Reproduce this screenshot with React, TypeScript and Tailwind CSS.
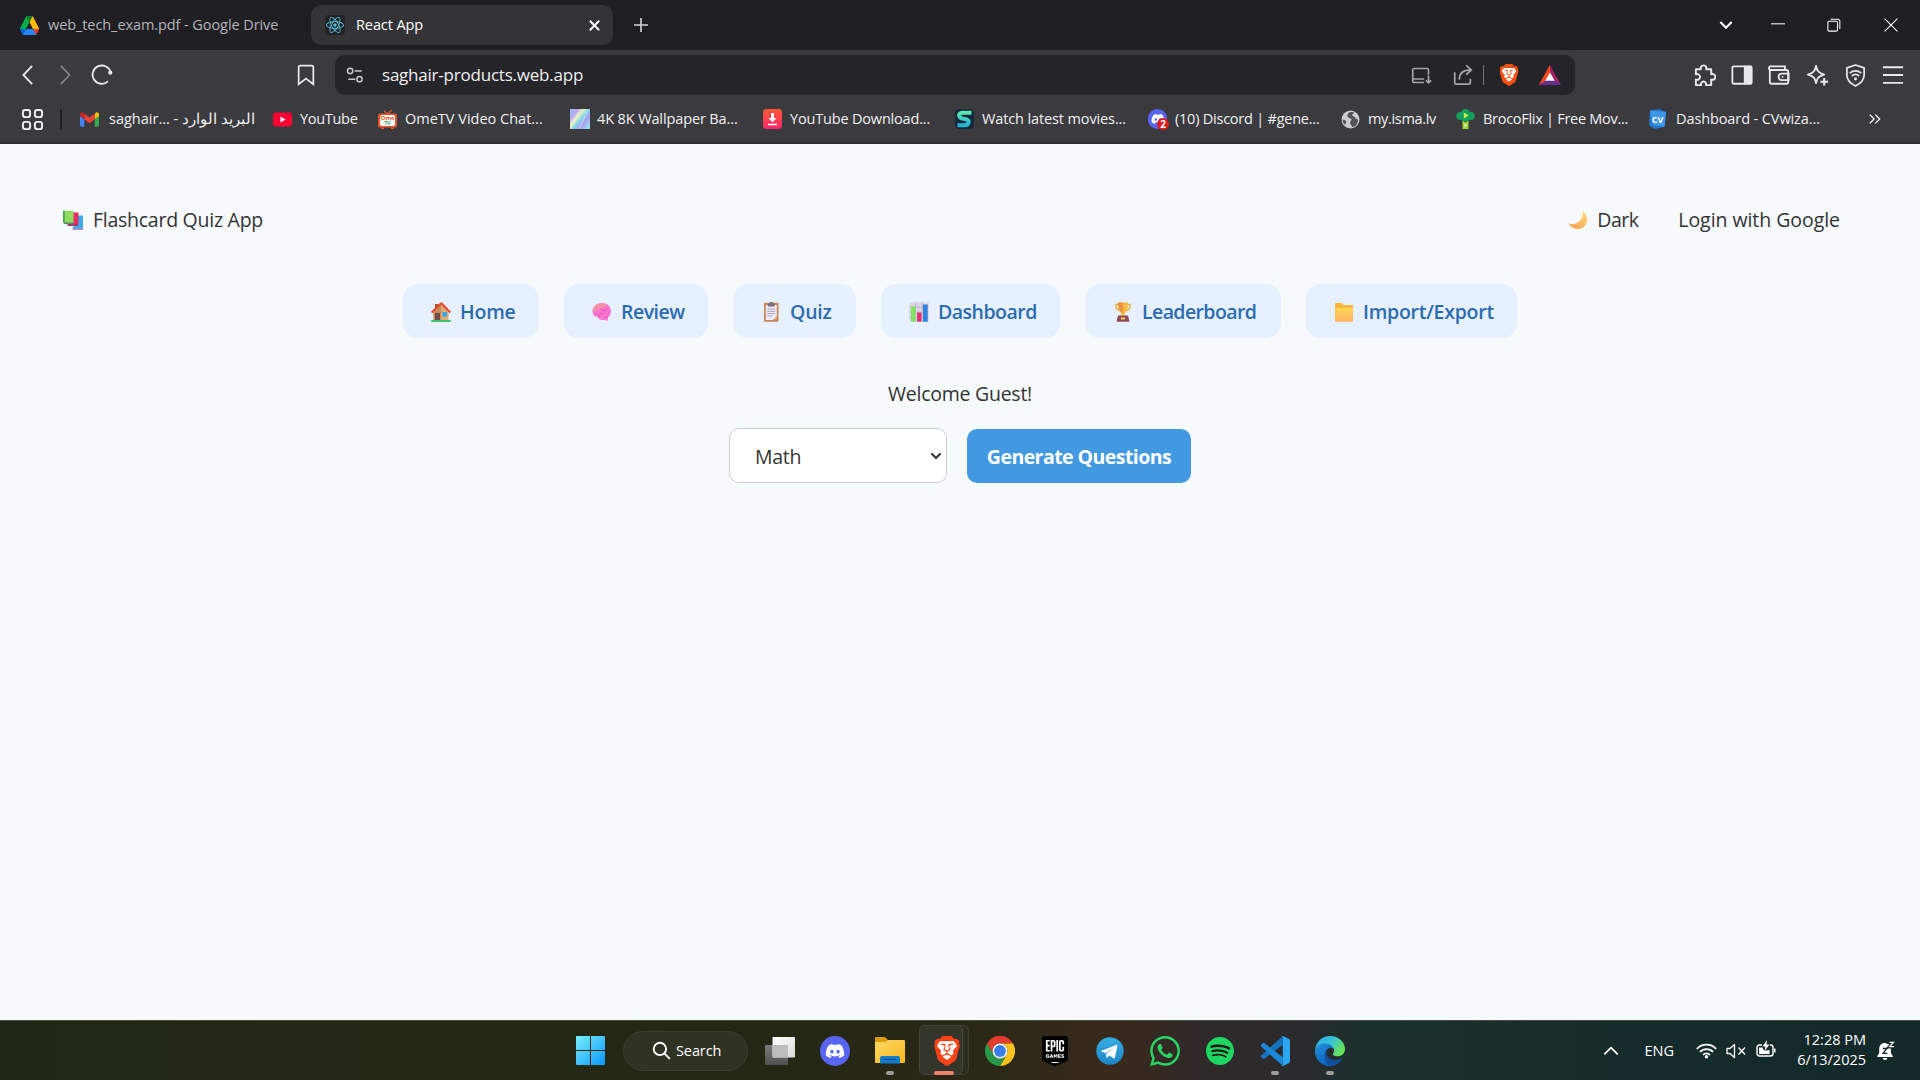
import React from 'react';
import { SiBrave, SiEpicgames, SiWhatsapp, SiSpotify, SiReact } from 'react-icons/si';
import { FaDiscord } from 'react-icons/fa';

/* ---------- brand icons ---------- */

const DriveIcon = () => (
  <svg viewBox="0 0 87.3 78" className="h-[19px] w-[19px]" preserveAspectRatio="none">
    <path fill="#0066da" d="m6.6 66.85 3.85 6.65c.8 1.4 1.95 2.5 3.3 3.3l13.75-23.8h-27.5c0 1.55.4 3.1 1.2 4.5z" />
    <path fill="#00ac47" d="m43.65 25-13.75-23.8c-1.35.8-2.5 1.9-3.3 3.3l-25.4 44a9.06 9.06 0 0 0 -1.2 4.5h27.5z" />
    <path fill="#ea4335" d="m73.55 76.8c1.35-.8 2.5-1.9 3.3-3.3l1.6-2.75 7.65-13.25c.8-1.4 1.2-2.95 1.2-4.5h-27.5l5.85 11.5z" />
    <path fill="#00832d" d="m43.65 25 13.75-23.8c-1.35-.8-2.9-1.2-4.5-1.2h-18.5c-1.6 0-3.15.45-4.5 1.2z" />
    <path fill="#2684fc" d="m59.8 53h-32.3l-13.75 23.8c1.35.8 2.9 1.2 4.5 1.2h50.8c1.6 0 3.15-.45 4.5-1.2z" />
    <path fill="#ffba00" d="m73.4 26.5-12.7-22c-.8-1.4-1.95-2.5-3.3-3.3l-13.75 23.8 16.15 28h27.45c0-1.55-.4-3.1-1.2-4.5z" />
  </svg>
);

const BraveIcon = ({ big }: { big?: boolean }) => (
  <span className={big ? 'grid h-[30px] w-[26px] place-items-center' : 'grid h-[22px] w-5 place-items-center'}>
    <svg viewBox="0 0 24 24" className="col-start-1 row-start-1 h-full w-full" preserveAspectRatio="none">
      <path fill="#fff" d="M6 4h12l2.500 4-3 9.500L12 21.500l-5.500-4L3.500 8z" />
    </svg>
    <SiBrave
      className={big ? 'col-start-1 row-start-1 h-[30px] w-[30px] text-[#ff4316]' : 'col-start-1 row-start-1 h-[22px] w-[22px] text-[#fb5010]'}
    />
  </span>
);

const GmailIcon = () => (
  <svg viewBox="52 42 88 66" className="h-[15px] w-[19px]">
    <path fill="#4285f4" d="M58 108h14V74L52 59v43c0 3.320 2.690 6 6 6" />
    <path fill="#34a853" d="M120 108h14c3.320 0 6-2.690 6-6V59l-20 15" />
    <path fill="#fbbc04" d="M120 48v26l20-15v-8c0-7.420-8.470-11.650-14.400-7.200" />
    <path fill="#ea4335" d="M72 74V48l24 18 24-18v26L96 92" />
    <path fill="#c5221f" d="M52 51v8l20 15V48l-5.600-4.200c-5.940-4.450-14.400-.22-14.400 7.200" />
  </svg>
);

const YouTubeIcon = () => (
  <svg viewBox="0 0 19 19" className="h-[19px] w-[19px]">
    <rect y="2.500" width="19" height="14" rx="3.200" fill="#ff0033" />
    <path d="M7.500 6.500v6l5-3z" fill="#fff" />
  </svg>
);

const OmeIcon = () => (
  <span className="relative flex h-[19px] w-[19px] flex-col items-center justify-end">
    <svg viewBox="0 0 19 19" className="absolute inset-0 h-[19px] w-[19px]">
      <path d="M6 1l3.500 3L14 0" stroke="#e8552d" strokeWidth="1.300" fill="none" />
      <rect y="3.500" width="19" height="14" rx="2" fill="#e8552d" />
      <rect x="2" y="5" width="15" height="11" rx="2.500" fill="#fff" />
      <path d="M3 17.500v1.500h3v-1.500zM13 17.500v1.500h3v-1.500z" fill="#e8552d" />
    </svg>
    <span className="relative text-[6px] leading-[5px] font-bold text-[#e8552d]">Ome</span>
    <span className="relative mb-[3px] text-[5px] leading-[5px] font-bold text-[#2f9c5a]">TV</span>
  </span>
);

const WallpaperIcon = () => (
  <svg viewBox="0 0 20 20" className="h-5 w-5">
    <defs>
      <linearGradient id="wall" x1="0" y1="0" x2="1" y2=".8">
        <stop offset="0" stopColor="#8fc1f5" />
        <stop offset=".25" stopColor="#b9a8f2" />
        <stop offset=".42" stopColor="#e9f3c0" />
        <stop offset=".58" stopColor="#7fd5ea" />
        <stop offset=".75" stopColor="#ad9aee" />
        <stop offset="1" stopColor="#9adfef" />
      </linearGradient>
    </defs>
    <rect width="20" height="20" fill="url(#wall)" />
    <path d="M0 20L9 3M9 20l9-19" stroke="#ffffff" strokeOpacity=".4" strokeWidth="1.200" />
  </svg>
);

const DownloadIcon = () => (
  <svg viewBox="0 0 19 20" className="h-5 w-[19px]">
    <defs>
      <linearGradient id="dl" x1="0" y1="0" x2="0" y2="1">
        <stop offset="0" stopColor="#ff5a36" />
        <stop offset="1" stopColor="#f5256b" />
      </linearGradient>
    </defs>
    <rect width="19" height="20" rx="3.500" fill="url(#dl)" />
    <path d="M8 4h3v5h2.800L9.500 13.200 5.200 9H8z" fill="#fff" />
    <path d="M5 15.500h9" stroke="#fff" strokeWidth="1.500" />
  </svg>
);

const MoviesIcon = () => (
  <svg viewBox="0 0 19 20" className="h-5 w-[19px]">
    <defs>
      <linearGradient id="mv" x1="0" y1="0" x2="0" y2="1">
        <stop offset="0" stopColor="#5ee6b0" />
        <stop offset="1" stopColor="#25b5d3" />
      </linearGradient>
    </defs>
    <rect width="19" height="20" rx="4.500" fill="#132a3c" />
    <path d="M16.500 3.800H7.500C5 3.800 3.800 5.200 4.200 7c.4 1.900 2 2.400 4.300 2.900 3.200.6 5.500.8 5.200 3.100-.2 2-1.900 3.200-4.200 3.200H2.500" stroke="url(#mv)" strokeWidth="4" fill="none" />
  </svg>
);

const DiscordBadgeIcon = () => (
  <span className="relative grid h-5 w-[19px] place-items-center rounded-full bg-[#5865f2]">
    <FaDiscord className="h-3 w-3.5 text-white" />
    <span className="absolute -right-0.5 -bottom-px grid h-3 w-3 place-items-center rounded-full bg-[#e0191f] text-[10px] leading-none font-bold text-white">2</span>
  </span>
);

const IsmaIcon = () => (
  <svg viewBox="0 0 19 19" className="h-[19px] w-[19px]">
    <circle cx="9.500" cy="9.500" r="9" fill="#c9cdd1" />
    <path d="M11 2c-3 0-5 2-4.500 4.200.4 2 3.600 1.500 4 3.300.3 1.600-2 2-1.500 3.500.3 1.300 2 2.500 2 4 4.300-.6 6-3.500 6-7 0-1.200-2.500-.5-2.700-2C14 6 11.500 7 11.300 5.300 11.200 4 13 3.500 13 2.500zM1.500 9.500c1.500 0 3.500.8 3.700 2.200.2 1.500-1.200 1.700-1 3.300C2.500 13.500 1.500 11.500 1.500 9.500z" fill="#505256" />
  </svg>
);

const BrocoIcon = () => (
  <svg viewBox="0 0 19 20" className="h-5 w-[19px]">
    <g fill="#12a05c">
      <circle cx="9.500" cy="4.500" r="4.500" />
      <circle cx="4.300" cy="7" r="4" />
      <circle cx="14.700" cy="7" r="4" />
      <circle cx="9.500" cy="8.500" r="4" />
    </g>
    <path d="M7.800 3.500v6l5-3z" fill="#c9f04a" />
    <path d="M6.500 11.500l3 2 3-2V20h-6z" fill="#9fd62f" />
    <path d="M8.500 14.500v3.600l2.600-1.800z" fill="#fff" />
  </svg>
);

const CvIcon = () => (
  <span className="relative grid h-5 w-[17px] place-items-center">
    <svg viewBox="0 0 17 20" className="absolute inset-0 h-5 w-[17px]">
      <path d="M1 1.500L10 0l7 3-1.500 15L5 20 0 16z" fill="#2476c9" />
      <path d="M1 1.500l2.500 14.500L15.500 18 17 3z" fill="#3d96ea" />
    </svg>
    <span className="relative text-[9px] leading-none font-bold text-white">CV</span>
  </span>
);

/* ---------- browser chrome ---------- */

const Stroke = ({ children, className, w = 1.5 }: { children: React.ReactNode; className: string; w?: number }) => (
  <svg viewBox="0 0 24 24" className={className} fill="none" stroke="currentColor" strokeWidth={w}>
    {children}
  </svg>
);

const TabBar = () => (
  <div className="flex h-[50px] items-center bg-[#1f1e23]">
    <div className="flex w-[311px] items-center pl-5">
      <DriveIcon />
      <span className="ml-[9px] text-[14.5px] tracking-[-0.08px] text-[#b4b4b8]">web_tech_exam.pdf - Google Drive</span>
    </div>
    <div className="flex h-10 w-[302px] items-center rounded-[10px] bg-[#343337] pr-[11px] pl-3.5">
      <span className="grid h-5 w-5 place-items-center rounded-sm bg-[#202226]">
        <SiReact className="h-[18px] w-[18px] text-[#58c4dc]" />
      </span>
      <span className="ml-[11px] text-[14.5px] tracking-[-0.1px] text-white">React App</span>
      <Stroke className="ml-auto h-[15px] w-[15px] text-white" w={3.2}>
        <path d="M4.500 4.500l15 15M19.500 4.500l-15 15" />
      </Stroke>
    </div>
    <Stroke className="ml-5 h-4 w-4 text-[#d8d8da]" w={2.4}>
      <path d="M12 1.500v21M1.500 12h21" />
    </Stroke>
    <div className="ml-auto flex items-center text-white">
      <Stroke className="mr-[37px] h-4 w-4" w={3.2}>
        <path d="M3.500 7.500l8.500 8.500 8.500-8.500" />
      </Stroke>
      <Stroke className="mr-[42px] h-3.5 w-3.5" w={1.8}>
        <path d="M0 10h24" />
      </Stroke>
      <Stroke className="mr-[43px] h-3.5 w-3.5" w={1.8}>
        <rect x="1.500" y="5.500" width="16.500" height="17" rx="2" />
        <path d="M6 2h12.500a3.500 3.500 0 0 1 3.500 3.500V19" />
      </Stroke>
      <Stroke className="mr-[22px] h-3.5 w-3.5" w={1.8}>
        <path d="M1 1l22 22M23 1L1 23" />
      </Stroke>
    </div>
  </div>
);

const Toolbar = () => (
  <div className="flex h-[50px] items-center bg-[#3b3a3f] text-[#e9e9eb]">
    <Stroke className="ml-[18px] h-5 w-5" w={2.2}>
      <path d="M17 1L6.500 12 17 23" />
    </Stroke>
    <Stroke className="ml-[17px] h-5 w-5 text-[#88878c]" w={2}>
      <path d="M7 1l10.500 11L7 23" />
    </Stroke>
    <Stroke className="ml-[16px] h-[22px] w-[22px]" w={2}>
      <path d="M18.500 19A10 10 0 1 1 21.500 9.500" />
      <circle cx="21" cy="9.500" r="2.300" fill="currentColor" stroke="none" />
    </Stroke>
    <Stroke className="ml-[182px] h-[22px] w-[22px]" w={1.900}>
      <path d="M4 3.500A1.800 1.800 0 0 1 5.800 1.700h12.400A1.800 1.800 0 0 1 20 3.500V22l-8-6-8 6z" />
    </Stroke>
    <div className="ml-[18px] flex h-10 w-[1240px] items-center rounded-[10px] bg-[#252429]">
      <Stroke className="ml-[11px] h-[18px] w-[18px] text-[#c9c9cc]" w={2}>
        <circle cx="5.500" cy="6.500" r="3.500" />
        <path d="M11.500 6.500H21M3 17.500h9.500" />
        <circle cx="18" cy="17.500" r="3.500" />
      </Stroke>
      <span className="ml-[18px] text-[17px] tracking-[-0.22px] text-[#f0f0f2]">saghair-products.web.app</span>
      <div className="ml-auto flex items-center text-[#a3a3a8]">
        <Stroke className="h-[21px] w-[21px]" w={1.900}>
          <path d="M15 20H3.500A1.500 1.500 0 0 1 2 18.500v-13A1.500 1.500 0 0 1 3.500 4h15A1.500 1.500 0 0 1 20 5.500V11M2 16h13" />
          <path d="M20 12v8.500M17 17.500l3 3 3-3" />
        </Stroke>
        <Stroke className="ml-[20px] h-[22px] w-[22px]" w={1.900}>
          <path d="M3 9v11.500A1.500 1.500 0 0 0 4.500 22h14a1.500 1.500 0 0 0 1.500-1.500V16" />
          <path d="M8 17C8 10 12 6.500 20.500 6.500M15.500 1.500l5.500 5-5.500 5" />
        </Stroke>
        <span className="ml-[9px] h-5 w-px bg-[#77767c]" />
        <span className="ml-[14px]">
          <BraveIcon />
        </span>
        <svg viewBox="0 0 22 20" className="mr-[14px] ml-[21px] h-5 w-[22px]">
          <path d="M11 0L0 20l11-7z" fill="#ff4724" />
          <path d="M11 0l11 20-11-7z" fill="#9e1f63" />
          <path d="M0 20h22l-6.500-4.500h-9z" fill="#662d91" />
          <path d="M11 0v7L6.300 15.700 0 20z" fill="#ff4724" />
          <path d="M11 7.500l4.700 8.200H6.300z" fill="#fff" />
        </svg>
      </div>
    </div>
    <div className="ml-auto flex w-[227px] items-center justify-between pr-[16px]">
      <Stroke className="h-[23px] w-[23px]" w={2}>
        <path d="M3 5.500h5.200a3 3 0 1 1 5.600 0H19v5.300a3 3 0 1 1 0 5.400V22h-5.500a2.700 2.700 0 1 0-5 0H3v-5.800a3 3 0 1 0 0-5.400z" strokeLinejoin="round" />
      </Stroke>
      <Stroke className="h-[22px] w-[22px]" w={2}>
        <rect x="1.500" y="2.500" width="21" height="19" rx="1.500" />
        <path d="M15 3h7v18h-7z" fill="currentColor" />
      </Stroke>
      <Stroke className="h-[22px] w-[22px]" w={2}>
        <path d="M2 6V19.500A2 2 0 0 0 4 21.500h16a2 2 0 0 0 2-2V8.500a2 2 0 0 0-2-2H2.500A2 2 0 0 1 4 2.500h14.500v4" />
        <path d="M22.500 10.500H15a3.500 3.500 0 0 0 0 7h7.500z" />
        <circle cx="16" cy="14" r="1" fill="currentColor" stroke="none" />
      </Stroke>
      <Stroke className="h-[23px] w-[23px]" w={1.900}>
        <path d="M10.500 2c1 5.500 3 7.500 8.500 9-5.500 1.500-7.500 3.500-8.500 9-1-5.500-3-7.500-8.500-9 5.500-1.500 7.500-3.500 8.500-9z" strokeLinejoin="round" />
        <path d="M19 14.500v8M15 18.500h8" strokeWidth="2.200" />
      </Stroke>
      <Stroke className="h-[23px] w-[23px]" w={1.800}>
        <path d="M12 1l9 3v7.500c0 5.500-4 9-9 11.500-5-2.500-9-6-9-11.500V4z" strokeLinejoin="round" />
        <path d="M6 9.500c3.500-3 8.500-3 12 0M8.200 12.500c2.300-1.900 5.300-1.900 7.600 0" />
        <circle cx="12" cy="15.500" r="1.600" fill="currentColor" stroke="none" />
      </Stroke>
      <Stroke className="h-[22px] w-[22px]" w={2}>
        <path d="M1 3.500h22M1 12h22M1 20.500h22" />
      </Stroke>
    </div>
  </div>
);

const Bookmark = ({ icon, label, className }: { icon: React.ReactNode; label: React.ReactNode; className: string }) => (
  <div className={`flex shrink-0 items-center whitespace-nowrap ${className}`}>
    <span className="mr-[7px] flex w-5 shrink-0">{icon}</span>
    <span>{label}</span>
  </div>
);

const BookmarksBar = () => (
  <div className="flex h-[44px] items-center border-b-2 border-[#2d2d33] bg-[#3b3a3f] pb-1 text-[14.5px] text-[#f1f1f3]">
    <Stroke className="ml-[21px] h-[23px] w-[23px]" w={2}>
      <rect x="2" y="2" width="7.500" height="7.500" rx="2.500" />
      <rect x="14.500" y="2" width="7.500" height="7.500" rx="2.500" />
      <rect x="2" y="14.500" width="7.500" height="7.500" rx="2.500" />
      <rect x="14.500" y="14.500" width="7.500" height="7.500" rx="2.500" />
    </Stroke>
    <span className="mr-[18px] ml-4 h-5 w-0.5 rounded bg-[#1f1e23]" />
    <Bookmark
      className="w-[193px]"
      icon={<GmailIcon />}
      label={
        <span dir="ltr" className="ml-0.5 flex gap-1">
          <span>saghair... -</span>
          <span dir="rtl" className="text-[14.5px]">البريد الوارد</span>
        </span>
      }
    />
    <Bookmark className="w-[105px] tracking-[-0.3px]" icon={<YouTubeIcon />} label="YouTube" />
    <Bookmark className="w-[192px]" icon={<OmeIcon />} label="OmeTV Video Chat..." />
    <Bookmark className="w-[193px] tracking-[-0.12px]" icon={<WallpaperIcon />} label="4K 8K Wallpaper Ba..." />
    <Bookmark className="w-[192px] tracking-[-0.18px]" icon={<DownloadIcon />} label="YouTube Download..." />
    <Bookmark className="w-[193px] tracking-[-0.12px]" icon={<MoviesIcon />} label="Watch latest movies..." />
    <Bookmark className="w-[193px] tracking-[-0.23px]" icon={<DiscordBadgeIcon />} label="(10) Discord | #gene..." />
    <Bookmark className="w-[115px] tracking-[-0.33px]" icon={<IsmaIcon />} label="my.isma.lv" />
    <Bookmark className="w-[193px] tracking-[-0.28px]" icon={<BrocoIcon />} label="BrocoFlix | Free Mov..." />
    <Bookmark className="tracking-[-0.1px]" icon={<CvIcon />} label="Dashboard - CVwiza..." />
    <Stroke className="mr-[38px] ml-auto h-3.5 w-3.5" w={2.4}>
      <path d="M3 4.500l7.500 7.500L3 19.500M12.500 4.500l7.500 7.500-7.500 7.500" />
    </Stroke>
  </div>
);

/* ---------- page emoji ---------- */

const Emoji = ({ children, className = '' }: { children: React.ReactNode; className?: string }) => (
  <svg viewBox="0 0 20 20" className={`h-5 w-5 shrink-0 ${className}`}>
    {children}
  </svg>
);

const HouseEmoji = () => (
  <Emoji>
    <path d="M4 2h3v5H4z" fill="#a0522d" />
    <path d="M2.500 9.500L10 2l7.500 7.500v9h-15z" fill="#e0a873" />
    <path d="M2.500 9.500L10 2v16.500H2.500z" fill="#c98a58" />
    <path d="M.7 10.500L9.700 1.500h1l8.600 9" stroke="#e8492f" strokeWidth="2" fill="none" />
    <rect x="4" y="11" width="5" height="7.500" fill="#6d4c52" />
    <rect x="11.500" y="10" width="4.500" height="4.500" fill="#2fa8ef" />
    <rect x="0" y="18" width="20" height="2" rx=".8" fill="#3fc36a" />
  </Emoji>
);
const BrainEmoji = () => (
  <Emoji>
    <path d="M10 1c5 0 9 3.500 9 8.300 0 3-1.200 4.700-3 6.200l-.5 3.700-2.500-1.500C10 18.700 6 17.500 5.500 14.500 2.500 15 .6 12.500.6 9.500.6 4.500 5 1 10 1z" fill="#fb74cf" />
    <path d="M10 1C5 1 .6 4.500.6 9c2 1.300 4 .3 4.500-1.300 2.500.5 4-1 4-2.700 3 1.500 4.500 0 6-2A9 9 0 0 0 10 1z" fill="#f590a8" />
    <path d="M5.500 14.500c1-2.500 3-3.500 5.500-3M9 7.500c2 1.500 4.500 1.500 6.500 0M12 15c2 .5 4-.5 5-2.500" stroke="#e04fb8" strokeWidth=".9" fill="none" />
  </Emoji>
);
const ClipboardEmoji = () => (
  <Emoji>
    <rect x="3" y=".8" width="14.500" height="19" rx=".8" fill="#c58755" />
    <path d="M4.800 3h11v11.500L12 18H4.800z" fill="#f0eaf7" />
    <path d="M12 18l3.800-3.500v3.500z" fill="#e8a05f" />
    <rect x="6.800" y="1.500" width="7" height="3" rx=".6" fill="#76707f" />
    <rect x="8.600" y="0" width="3.400" height="2.500" rx="1" fill="#76707f" />
    <path d="M6.300 7h8M6.300 9.300h8M6.300 11.600h8M6.300 13.900h5" stroke="#a49cb6" strokeWidth=".9" />
  </Emoji>
);
const ChartEmoji = () => (
  <Emoji>
    <rect x=".3" y=".3" width="19.400" height="19.400" rx="1" fill="#dcd5e6" />
    <path d="M.3 5h19.400M.3 10h19.400M.3 15h19.400M6.500.3v19.400M13.300.3v19.400" stroke="#b7aec6" strokeWidth=".7" />
    <rect x="2" y="4.500" width="4.500" height="15.200" fill="#7fe35f" />
    <rect x="8" y="10.500" width="4.500" height="9.200" fill="#e0306f" />
    <rect x="14" y="2.500" width="4.700" height="17.200" fill="#3182d8" />
  </Emoji>
);
const TrophyEmoji = () => (
  <Emoji>
    <path d="M5.500 2.500H3C2.500 6 4 8 7 8.500M14.500 2.500H17c.5 3.500-1 5.500-4 6" stroke="#f0a83a" strokeWidth="1.300" fill="none" />
    <path d="M5 .5h10c0 5-1 9.500-3.500 10.500V14h-3v-3C6 10 5 5.500 5 .5z" fill="#f8b93c" />
    <path d="M5 .5h5V11C6.500 10.500 5 5.500 5 .5z" fill="#eb9340" />
    <path d="M5 13.500h10l1.500 6.200h-13z" fill="#8f4a57" />
    <rect x="8" y="15.500" width="4" height="2" fill="#fad24b" />
  </Emoji>
);
const FolderEmoji = () => (
  <Emoji>
    <defs>
      <linearGradient id="fold" x1="0" y1="0" x2="0" y2="1">
        <stop offset="0" stopColor="#ffd84f" />
        <stop offset="1" stopColor="#ffb163" />
      </linearGradient>
    </defs>
    <path d="M1 2a1 1 0 0 1 1-1h5.500l2 2H18a1 1 0 0 1 1 1v5H1z" fill="#f8b73c" />
    <path d="M1 6h18v12.500a1.200 1.200 0 0 1-1.200 1.200H2.200A1.200 1.200 0 0 1 1 18.500z" fill="url(#fold)" />
  </Emoji>
);
const BooksEmoji = () => (
  <Emoji>
    <path d="M12 5.500h8v14H10z" fill="#35aef0" />
    <path d="M9.500 17.500H20v2.300H9.500z" fill="#8d8fd0" />
    <path d="M9 2.500h6.500v12H9z" fill="#e5305f" />
    <path d="M4.500 14H15v2H4.500z" fill="#a23d6f" />
    <path d="M0 .8h10.500V13H0z" fill="#92db62" />
    <path d="M0 .8h1.800V13H0z" fill="#4da84f" />
    <path d="M1 12.500h9.500v1.500H1z" fill="#5a8a6a" />
  </Emoji>
);
const MoonEmoji = () => (
  <Emoji>
    <defs>
      <linearGradient id="moon" x1="1" y1="0" x2="0" y2="1">
        <stop offset="0" stopColor="#ffdf7c" />
        <stop offset="1" stopColor="#f79a52" />
      </linearGradient>
    </defs>
    <path d="M14.500 1c4.500 3 6.200 8.500 3.700 13C15 20.500 5.500 21.500.3 13.500 5 15.500 9.500 13.500 12.500 10c2-3 2.800-5.500 2-9z" fill="url(#moon)" />
  </Emoji>
);

/* ---------- page ---------- */

const nav = [
  { label: 'Home', icon: <HouseEmoji />, w: 'w-[136px]', t: 'tracking-[-0.2px]' },
  { label: 'Review', icon: <BrainEmoji />, w: 'w-[144px]', t: 'tracking-[-0.5px]' },
  { label: 'Quiz', icon: <ClipboardEmoji />, w: 'w-[123px]', t: 'tracking-[-0.2px]' },
  { label: 'Dashboard', icon: <ChartEmoji />, w: 'w-[179px]', t: 'tracking-[-0.5px]' },
  { label: 'Leaderboard', icon: <TrophyEmoji />, w: 'w-[196px]', t: 'tracking-[-0.6px]' },
  { label: 'Import/Export', icon: <FolderEmoji />, w: 'w-[211px]', t: 'tracking-[-0.25px]' },
];

const Page = () => (
  <main className="flex h-[876px] flex-col bg-[#f7fafd] px-[63px] text-[19.5px] text-[#333333]">
    <header className="mt-[61px] flex h-[30px] items-center">
      <BooksEmoji className="ml-px" />
      <span className="ml-[10px] tracking-[-0.26px]">Flashcard Quiz App</span>
      <span className="ml-auto flex items-center">
        <MoonEmoji />
        <span className="ml-[9px] w-[81px] tracking-[-0.5px]">Dark</span>
        <span className="mr-[17px] tracking-[-0.05px]">Login with Google</span>
      </span>
    </header>
    <nav className="mt-[49px] flex justify-center gap-[25px]">
      {nav.map((n) => (
        <a key={n.label} className={`flex h-[54px] items-center rounded-[15px] bg-[#e6f0ff] pt-0.5 pl-[28px] font-semibold text-[#2b6cb0] ${n.w} ${n.t}`}>
          {n.icon}
          <span className="ml-[9px]">{n.label}</span>
        </a>
      ))}
    </nav>
    <p className="mt-[41px] text-center leading-[30px] tracking-[-0.25px]">Welcome Guest!</p>
    <div className="mt-[19px] flex justify-center gap-5">
      <div className="flex h-[55px] w-[218px] items-center rounded-[10px] border border-[#cccccc] bg-white pr-[3px] pl-[25px]">
        <span className="pt-0.5 tracking-[-0.3px]">Math</span>
        <Stroke className="ml-auto h-3.5 w-3.5" w={3.600}>
          <path d="M4 7.500l8 8 8-8" />
        </Stroke>
      </div>
      <button className="mt-px h-[54px] w-[224px] rounded-[10px] bg-[#4299e1] pt-0.5 font-bold tracking-[-0.55px] whitespace-nowrap text-white">
        Generate Questions
      </button>
    </div>
  </main>
);

/* ---------- taskbar ---------- */

const Slot = ({ children, dot }: { children: React.ReactNode; dot?: boolean }) => (
  <div className="relative flex h-[60px] w-[55px] items-center justify-center">
    {children}
    {dot && <span className="absolute bottom-[6px] left-[24px] h-1 w-2 rounded-full bg-[#9c9c98]" />}
  </div>
);

const Taskbar = () => (
  <footer className="flex h-[60px] items-center border-t border-[#444a3e] bg-[linear-gradient(90deg,#1f2716_0%,#222814_25%,#252715_42%,#2c2818_52%,#38291c_58%,#30292a_63%,#2a2b2d_68%,#1a302d_71%,#162b2b_85%,#132829_100%)] text-white">
    <div className="flex w-[1358px] items-center pl-[563px]">
      <Slot>
        <svg viewBox="0 0 29 29" className="h-[29px] w-[29px]">
          <defs>
            <linearGradient id="win" gradientUnits="userSpaceOnUse" x1="0" y1="0" x2="29" y2="29">
              <stop offset="0" stopColor="#7cf0ff" />
              <stop offset="1" stopColor="#0796fb" />
            </linearGradient>
          </defs>
          <path d="M1 0h13v14H0V1a1 1 0 0 1 1-1zM15 0h13a1 1 0 0 1 1 1v13H15zM0 15h14v14H1a1 1 0 0 1-1-1zM15 15h14v13a1 1 0 0 1-1 1H15z" fill="url(#win)" />
        </svg>
      </Slot>
      <div className="mr-[4px] ml-[5px] flex h-10 w-[125px] items-center rounded-full border border-[#3b3d2d] bg-[#303224] pl-[28px] text-[14.5px]">
        <Stroke className="h-[19px] w-[19px]" w={2.4}>
          <circle cx="10" cy="10" r="7.800" />
          <path d="M15.500 15.500L22.500 22.500" />
        </Stroke>
        <span className="ml-[5px] tracking-[-0.1px]">Search</span>
      </div>
      <Slot>
        <svg viewBox="0 0 30 28" className="h-7 w-[30px]">
          <defs>
            <linearGradient id="tvw" x1="0" y1="0" x2="1" y2="1">
              <stop offset="0" stopColor="#ffffff" />
              <stop offset="1" stopColor="#d9d9d9" />
            </linearGradient>
            <linearGradient id="tvg" x1="0" y1="0" x2="0" y2="1">
              <stop offset="0" stopColor="#7a7a7a" />
              <stop offset="1" stopColor="#505050" />
            </linearGradient>
          </defs>
          <rect y="8" width="23" height="20" rx="1" fill="url(#tvg)" />
          <rect x="7.500" width="22.500" height="20.500" rx="1" fill="url(#tvw)" />
          <path d="M7.500 8H23v12.500H7.500z" fill="#bcbcbc" />
        </svg>
      </Slot>
      <Slot>
        <span className="grid h-[30px] w-[30px] place-items-center rounded-full bg-[#5865f2]">
          <FaDiscord className="h-[20px] w-[20px]" />
        </span>
      </Slot>
      <Slot dot>
        <svg viewBox="0 0 30 27" className="h-[27px] w-[30px]">
          <defs>
            <linearGradient id="exp" x1="0" y1="0" x2="1" y2="1">
              <stop offset="0" stopColor="#ffd968" />
              <stop offset="1" stopColor="#f7b51c" />
            </linearGradient>
          </defs>
          <path d="M0 1a1 1 0 0 1 1-1h9l3 3v4H0z" fill="#dd9c08" />
          <path d="M0 5h11l2-2h16a1 1 0 0 1 1 1v21a1 1 0 0 1-1 1H1a1 1 0 0 1-1-1z" fill="url(#exp)" />
          <path d="M5 21a2 2 0 0 1 2-2h16a2 2 0 0 1 2 2v5.500H5z" fill="#137cc8" />
          <path d="M8.500 22.500h13" stroke="#0c4e8c" strokeWidth="1.200" />
        </svg>
      </Slot>
      <div className="relative flex h-[60px] w-[55px] items-center justify-center">
        <span className="absolute top-[4px] left-[2px] h-[50px] w-[50px] rounded-md border border-[#3f4031] bg-[#2c2d20]" />
        <span className="absolute top-[4px] left-[2px] h-[50px] w-[44px] rounded-md border border-[#45463a] bg-[#33342a]" />
        <span className="relative">
          <BraveIcon big />
        </span>
        <span className="absolute bottom-[6px] left-[17px] h-1 w-5 rounded-full bg-[#f0836c]" />
      </div>
      <Slot>
        <svg viewBox="0 0 48 48" className="h-[30px] w-[30px]">
          <path d="M3.200 12a24 24 0 0 1 41.600 0H24a12 12 0 0 0-10.400 18z" fill="#e33b2e" />
          <path d="M44.800 12A24 24 0 0 1 24 48l10.400-18A12 12 0 0 0 24 12z" fill="#fcc31e" />
          <path d="M24 48A24 24 0 0 1 3.200 12l10.400 18a12 12 0 0 0 20.800 0z" fill="#279847" />
          <circle cx="24" cy="24" r="12" fill="#fff" />
          <circle cx="24" cy="24" r="9.500" fill="#3b7de8" />
        </svg>
      </Slot>
      <Slot>
        <span className="relative flex h-[30px] w-[30px]">
          <span className="absolute top-[3px] left-[5px] h-[22px] w-5 bg-white" />
          <span className="absolute top-[23px] left-[9px] h-[4px] w-3 bg-white" />
          <SiEpicgames className="relative h-[30px] w-[30px] text-black" />
        </span>
      </Slot>
      <Slot>
        <svg viewBox="0 0 28 28" className="h-7 w-7">
          <defs>
            <linearGradient id="tg" x1="0" y1="0" x2="0" y2="1">
              <stop offset="0" stopColor="#37aee2" />
              <stop offset="1" stopColor="#1c86c7" />
            </linearGradient>
          </defs>
          <circle cx="14" cy="14" r="13.700" fill="url(#tg)" />
          <path d="M5.500 13.800L20.300 8c.8-.3 1.300.2 1.100 1.100l-2.500 11.600c-.2.800-.8 1-1.500.6l-3.900-2.900-2.100 2c-.5.500-.9.200-1-.4l-.9-4.200-3.900-1.100c-.8-.2-.8-.6-.1-.9z" fill="#fff" />
          <path d="M9.700 15.700L18 10.300l-6.600 6.400-.4 3z" fill="#a9c9dd" />
        </svg>
      </Slot>
      <Slot>
        <SiWhatsapp className="h-[30px] w-[30px] text-[#25d366]" />
      </Slot>
      <Slot>
        <span className="grid h-7 w-7 place-items-center rounded-full bg-[#181818]">
          <SiSpotify className="h-7 w-7 text-[#1ed760]" />
        </span>
      </Slot>
      <Slot dot>
        <svg viewBox="0 0 100 100" className="h-[30px] w-[30px]">
          <path d="M75 1L4 65c-2 2-2 4 0 6l5 5c2 1 4 1 6 0L76 29z" fill="#1572bd" />
          <path d="M75 99L4 35c-2-2-2-4 0-6l5-5c2-1 4-1 6 0l61 47z" fill="#1b87d6" />
          <path d="M71 98c2 2 5 2 7 1l19-9c2-1 3-3 3-5V15c0-2-1-4-3-5L78 1c-2-1-5-1-7 1 2-1 5 0 5 3v90c0 3-3 4-5 3z" fill="#2aa5f2" />
        </svg>
      </Slot>
      <Slot dot>
        <svg viewBox="0 0 30 30" className="h-[30px] w-[30px]">
          <defs>
            <linearGradient id="edgeTop" x1="0" y1="0" x2="1" y2=".5">
              <stop offset="0" stopColor="#2aa7dc" />
              <stop offset=".5" stopColor="#35c3de" />
              <stop offset="1" stopColor="#65e05a" />
            </linearGradient>
            <linearGradient id="edgeBody" x1="0" y1="0" x2=".6" y2="1">
              <stop offset="0" stopColor="#2292dc" />
              <stop offset="1" stopColor="#0c62bb" />
            </linearGradient>
          </defs>
          <path d="M.1 14C.8 6 7 0 15 0c9 0 15 6.500 15 13 0 4.500-3.300 7.300-7.500 7.300-3.500 0-5.300-1.300-4.500-2.500 1.500-2 1.500-4.500-.5-6.500C12.500 7.500 4 8.500.1 14z" fill="url(#edgeTop)" />
          <path d="M0 15.500C.5 10 5.500 7 10.500 7.500c4 .3 7 2.200 8 5-2-1.500-5-1-6.500 1-3.500 4.500-.5 12 6 15.500-1 .5-2 1-3 1C6.500 30 0 23.500 0 15.500z" fill="url(#edgeBody)" />
          <path d="M11.500 14.500c-1 3.500 1.500 9 8 9.500 3 .2 5.500-.7 8-2C25.500 26.500 20.500 30 15.500 30c-5-1.500-8.500-11.500-4-15.500z" fill="#11519f" />
        </svg>
      </Slot>
    </div>
    <div className="ml-auto flex items-center">
      <Stroke className="h-4 w-4" w={2.600}>
        <path d="M2 17L12 7l10 10" />
      </Stroke>
      <span className="ml-[25px] text-[14.5px]">ENG</span>
      <svg viewBox="0 0 24 18" className="ml-[22px] h-[16px] w-[21px]" fill="none" stroke="currentColor" strokeWidth="1.900">
        <path d="M1 6.500C7 .2 17 .2 23 6.500M4.500 10c4-4.300 11-4.300 15 0M8 13.500c2-2.300 6-2.300 8 0" />
        <circle cx="12" cy="15.500" r="2" fill="currentColor" stroke="none" />
      </svg>
      <svg viewBox="0 0 20 16" className="ml-[9px] h-4 w-5" fill="none" stroke="currentColor" strokeWidth="1.300">
        <path d="M1 5.500h3L8.500 1.500v13L4 10.500H1z" strokeLinejoin="round" />
        <path d="M12.500 4.500l6.500 7M19 4.500l-6.500 7" />
      </svg>
      <svg viewBox="0 0 20 18" className="-mt-1 ml-[10px] h-[18px] w-5" fill="none" stroke="currentColor" strokeWidth="1.400">
        <path d="M6 5H3.500A2.500 2.500 0 0 0 1 7.500v6A2.500 2.500 0 0 0 3.500 16h11a2.500 2.500 0 0 0 2.500-2.500v-6A2.500 2.500 0 0 0 14.500 5H14M18.800 8.500v4" />
        <path d="M3 7.500h3.500C7 10 8 10.500 10 10.500l3.500-.5v4H3z" fill="currentColor" stroke="none" />
        <path d="M11 0L6.500 6.500h3L8.500 11 13.500 4.500h-3z" fill="currentColor" stroke="none" />
      </svg>
      <div className="-mt-0.5 ml-[20px] w-[70px] text-right text-[14.5px] leading-5">
        <div>12:28 PM</div>
        <div>6/13/2025</div>
      </div>
      <svg viewBox="0 0 18 20" className="mr-[25px] ml-[11px] h-5 w-[18px]">
        <path d="M8 2C4 2 2.200 4.700 2.200 8v4L.3 15v1h15.400v-1l-1.800-3V4z" fill="#fff" />
        <path d="M5.500 17a2.600 2.600 0 0 0 5 0z" fill="#fff" />
        <path d="M11.500 1.300h5l-4.200 4.700H17" stroke="#132829" strokeWidth="3.200" fill="none" />
        <path d="M12.500 1.300h4l-3.800 4.400H17" stroke="#fff" strokeWidth="1.300" fill="none" />
        <path d="M5.800 7.500h4.200l-4 4.800h4.500" stroke="#132829" strokeWidth="1.300" fill="none" />
      </svg>
    </div>
  </footer>
);

export default function App() {
  return (
    <div className="flex h-[1080px] w-[1920px] flex-col overflow-hidden font-['Open_Sans','Noto_Sans',sans-serif]">
      <TabBar />
      <Toolbar />
      <BookmarksBar />
      <Page />
      <Taskbar />
    </div>
  );
}
